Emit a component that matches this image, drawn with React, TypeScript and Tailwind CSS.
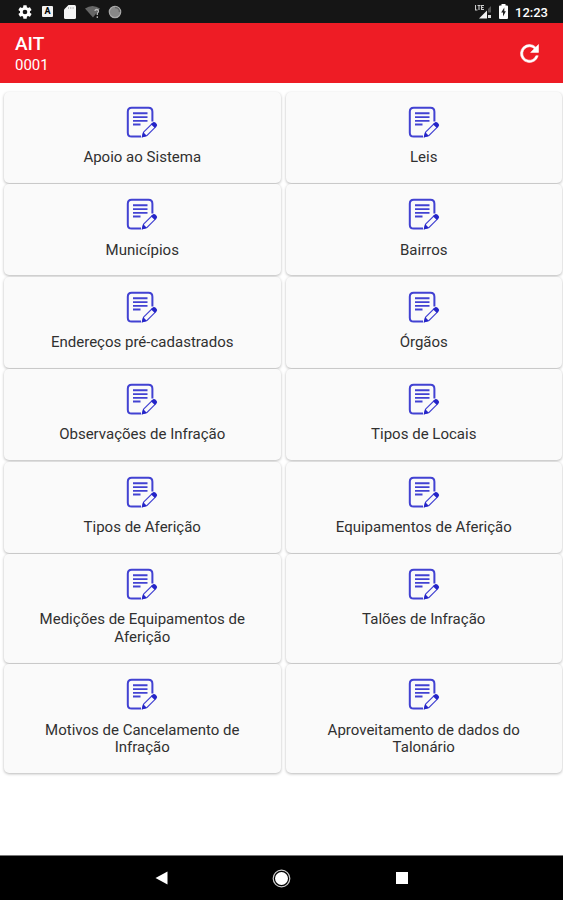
const ROWS = [
  ["Apoio ao Sistema", "Leis"],
  ["Municípios", "Bairros"],
  ["Endereços pré-cadastrados", "Órgãos"],
  ["Observações de Infração", "Tipos de Locais"],
  ["Tipos de Aferição", "Equipamentos de Aferição"],
  ["Medições de Equipamentos de Aferição", "Talões de Infração"],
  ["Motivos de Cancelamento de Infração", "Aproveitamento de dados do Talonário"],
];

function NoteIcon() {
  return (
    <svg width="32" height="33" viewBox="0 0 32 33" fill="none" stroke="#4242d2">
      <path
        d="M26.4 15.500V5.700Q26.400 1.800 22.500 1.800H5.700Q1.800 1.800 1.800 5.700V26.700Q1.800 30.600 5.700 30.600H15"
        strokeWidth="2"
      />
      <path d="M7 7.300H21.500M7 11.100H21.500M7 14.900H21.500M7 18.500H14.500" strokeWidth="1.900" />
      <path d="M17.600 26.200L26 17.800L29.400 21.100L21 29.500L16.600 30.700Z" strokeWidth="1.200" />
      <path d="M25 18.200L27 16.300Q28.200 15.500 29.400 16.600L30.700 17.900Q31.600 19.100 30.600 20.300L28.800 22Z" fill="#2424c8" stroke="none" />
      <path d="M17.100 26L21 29.900L15.600 31.600Z" fill="#2424c8" stroke="none" />
    </svg>
  );
}

function StatusBar() {
  return (
    <div className="flex h-[23px] shrink-0 items-center justify-between bg-[#151515] pr-[15px] pl-[17px] text-white">
      <div className="flex items-center">
        <svg width="16" height="16" viewBox="0 0 24 24" fill="currentColor">
          <path
            fillRule="evenodd"
            d="M19.4 13a7.500 7.500 0 0 0 0-2l2.100-1.650a.5.5 0 0 0 .12-.64l-2-3.460a.5.5 0 0 0-.61-.22l-2.490 1a7.300 7.300 0 0 0-1.690-.98l-.38-2.650A.49.49 0 0 0 14 2h-4a.49.49 0 0 0-.49.42l-.38 2.650c-.61.25-1.170.59-1.690.98l-2.490-1a.5.5 0 0 0-.61.22l-2 3.460a.5.5 0 0 0 .12.64L4.600 11a7.500 7.500 0 0 0 0 2l-2.110 1.650a.5.5 0 0 0-.12.64l2 3.460c.12.22.39.3.61.22l2.490-1c.52.4 1.080.73 1.690.98l.38 2.650c.03.24.24.42.49.42h4c.25 0 .46-.18.49-.42l.38-2.650c.61-.25 1.170-.59 1.690-.98l2.490 1c.23.09.49 0 .61-.22l2-3.460a.5.5 0 0 0-.12-.64L19.400 13zM12 15.500a3.500 3.500 0 1 1 0-7 3.500 3.500 0 0 1 0 7z"
          />
        </svg>
        <div className="ml-[9px] flex h-[11px] w-[11px] items-center justify-center rounded-[1px] bg-[#f2f2f2] text-[9px] font-bold text-black">
          A
        </div>
        <svg className="ml-[11px]" width="12" height="14" viewBox="0 0 12 14">
          <path d="M4.500 0H10.500Q12 0 12 1.500V12.500Q12 14 10.500 14H1.500Q0 14 0 12.500V4.500Z" fill="#f5f5f5" />
          <path d="M4.500 2V4M6.800 2V4M9.100 2V4" stroke="#bbb" />
        </svg>
        <svg className="ml-[9px]" width="16" height="14" viewBox="0 0 16 14">
          <path d="M0 3.500Q7.500-1.500 15 3.500L8 12.500Z" fill="#666" />
          <path d="M10 6Q10 4.500 11.700 4.500Q13.500 4.500 13.500 6.200Q13.500 7.200 12.300 8V10M12.300 11.300V13" fill="none" stroke="#bbb" strokeWidth="1.300" />
        </svg>
        <svg className="ml-[7px]" width="14" height="14" viewBox="0 0 14 14">
          <circle cx="7" cy="7" r="5.700" fill="#888" stroke="#aaa" strokeWidth="1.200" />
          <path d="M7 2.500A4.500 4.500 0 0 1 11.500 7" fill="none" stroke="#666" strokeWidth="1.500" />
        </svg>
      </div>
      <div className="flex items-center">
        <svg width="17" height="15" viewBox="0 0 17 15">
          <path d="M0.500 1V6H2.500M2.500 1.500H5.500M4 1V6M9 1.500H6.500V5.500H9M6.500 3.500H8.500" fill="none" stroke="#ccc" strokeWidth="1.100" />
          <path d="M4 14.500L12 6.500V14.500Z" fill="#f0f0f0" />
          <path d="M13 5L16 2V8.500H13Z" fill="#555" />
          <path d="M13 11H16V14H13Z" fill="#ddd" />
        </svg>
        <svg className="ml-[7px]" width="9" height="15" viewBox="0 0 9 15">
          <path d="M2.500 0H6.500V1.500H8Q9 1.500 9 2.500V14Q9 15 8 15H1Q0 15 0 14V2.500Q0 1.500 1 1.500H2.500Z" fill="#fff" />
          <path d="M5.300 3.500L2.200 8.600H4V12.500L6.900 7.300H5.300Z" fill="#222" />
        </svg>
        <span className="ml-[7px] w-[33px] pt-[2px] text-[13px] leading-[21px] font-medium">12:23</span>
      </div>
    </div>
  );
}

function Header() {
  return (
    <header className="flex h-[59.500px] shrink-0 items-center justify-between bg-[#ee1c25] pr-[20px] pl-[15px] text-white">
      <div className="pt-[4px]">
        <h1 className="text-[19px] leading-[22px] font-medium">AIT</h1>
        <p className="text-[15px] leading-[21px]">0001</p>
      </div>
      <svg className="mt-[2px]" width="27" height="27" viewBox="0 0 24 24" fill="currentColor" stroke="currentColor" strokeWidth="0.500">
        <path d="M17.650 6.350A7.960 7.960 0 0 0 12 4a8 8 0 1 0 7.730 10h-2.080A6 6 0 1 1 12 6c1.660 0 3.140.69 4.220 1.780L13 11h7V4z" />
      </svg>
    </header>
  );
}

function MenuCard({ label }: { label: string }) {
  return (
    <button
      type="button"
      className="mb-[1.500px] flex flex-col items-center rounded-[5px] bg-[#fafafa] px-[24px] pt-[14px] shadow-[0_1px_3px_rgba(0,0,0,0.28)]"
    >
      <NoteIcon />
      <span className="mt-[10.200px] text-center text-[15.030px] leading-[17.700px] text-[#303030]">
        {label}
      </span>
    </button>
  );
}

function NavBar() {
  return (
    <nav className="flex h-[45px] shrink-0 items-center justify-between border-t border-[#777] bg-black pr-[155px] pl-[155px]">
      <svg width="13" height="14" viewBox="0 0 13 14">
        <path d="M0.500 7L12.500 0.500V13.500Z" fill="#fff" />
      </svg>
      <svg className="mr-[1px]" width="19" height="19" viewBox="0 0 19 19">
        <circle cx="9.500" cy="9.500" r="8.300" fill="none" stroke="#ccc" strokeWidth="1.200" />
        <circle cx="9.500" cy="9.500" r="6.500" fill="#fff" />
      </svg>
      <div className="h-[12px] w-[12px] bg-white" />
    </nav>
  );
}

export default function App() {
  return (
    <div className="flex h-[900px] w-[563px] flex-col overflow-hidden bg-white font-[Roboto,sans-serif]">
      <StatusBar />
      <Header />
      <main className="grid flex-1 grid-cols-2 grid-rows-[repeat(5,92.4px)_110.3px_110.3px] content-start gap-x-[5px] pt-[9.600px] pr-[1px] pl-[4px]">
        {ROWS.flat().map((label) => (
          <MenuCard key={label} label={label} />
        ))}
      </main>
      <NavBar />
    </div>
  );
}
